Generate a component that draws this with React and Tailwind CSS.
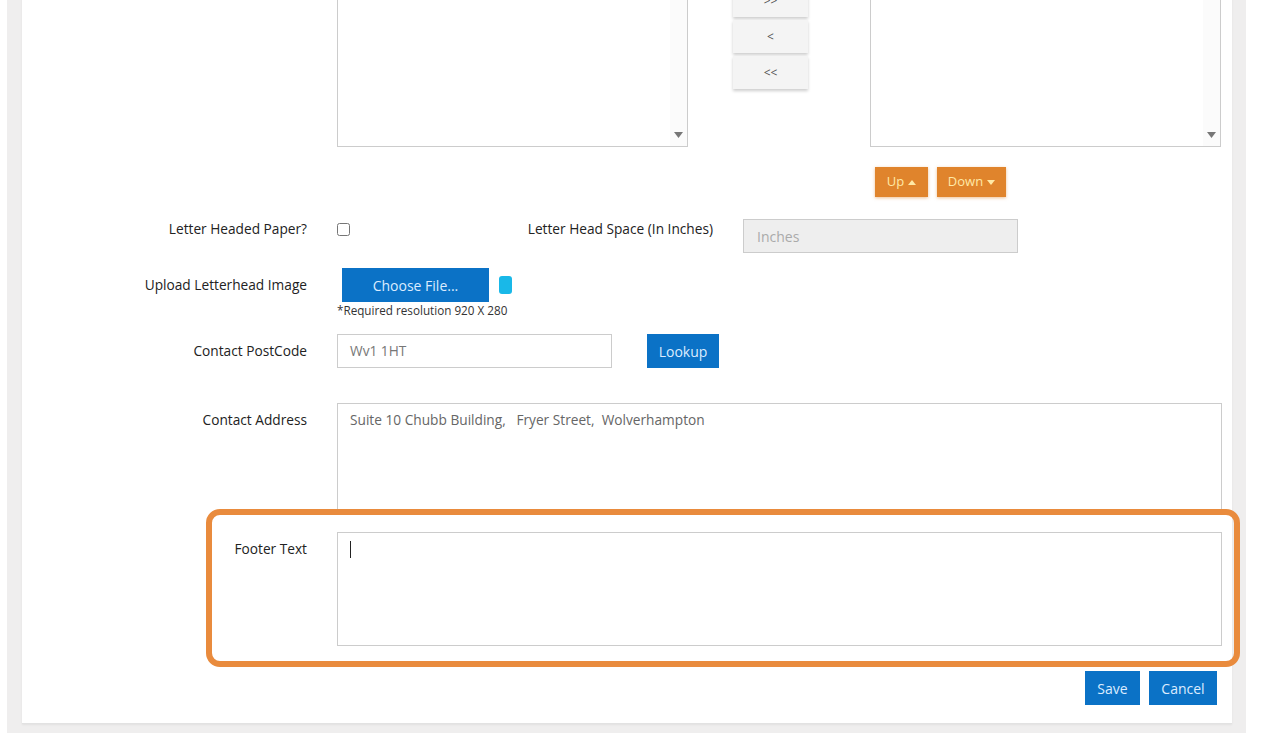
import React from 'react';

const ScrollArrow = () => (
  <div className="absolute right-0 top-0 bottom-0 w-[17px] bg-[#fbfbfb] flex items-end justify-center pb-[8px]">
    <svg width="9" height="6" viewBox="0 0 9 6">
      <path d="M0 0 H9 L4.5 6 Z" fill="#777" />
    </svg>
  </div>
);

const Label = ({ children, className = '' }) => (
  <div className={`w-[285px] shrink-0 text-right text-[13.7px] text-[#222] leading-5 ${className}`}>{children}</div>
);

export default function App() {
  const moveBtn = 'w-[75px] h-[33px] bg-[#f4f4f4] shadow-[0_2px_3px_rgba(0,0,0,0.2)] flex items-center justify-center text-[12px] text-[#555]';
  const blueBtn = 'h-[34px] bg-[#0b72c6] text-[#dcecff] text-[14px] flex items-center justify-center';
  const orangeBtn = 'h-[30px] bg-[#e0842c] text-[#ffe9a6] text-[13px] flex items-center justify-center gap-[4px] shadow-[0_1px_3px_rgba(224,132,44,0.5)]';

  return (
    <div className="relative h-[733px] overflow-hidden bg-white" style={{ fontFamily: '"Open Sans", "Liberation Sans", sans-serif' }}>
      <div className="ml-[7px] w-[1239px] h-[733px] bg-[#efeeee] pl-[15px] flex flex-col">
        <div className="w-[1210px] -mt-[60px] bg-white border-b border-[#e2e2e2] shadow-[0_1px_2px_rgba(0,0,0,0.06)] pb-[18px]">
          {/* list boxes */}
          <div className="flex">
            <div className="w-[285px] shrink-0" />
            <div className="ml-[30px] flex">
              <div className="relative w-[351px] h-[207px] border border-[#cccccc]">
                <ScrollArrow />
              </div>
              <div className="ml-[45px] pt-[8px] flex flex-col gap-[3px]">
                <div className={moveBtn}>&gt;</div>
                <div className={moveBtn}>&gt;&gt;</div>
                <div className={moveBtn}>&lt;</div>
                <div className={moveBtn}>&lt;&lt;</div>
              </div>
              <div className="ml-[62px] relative w-[351px] h-[207px] border border-[#cccccc]">
                <ScrollArrow />
              </div>
            </div>
          </div>

          {/* up / down */}
          <div className="flex mt-[20px]">
            <div className="w-[285px] shrink-0" />
            <div className="ml-[568px] flex gap-[9px]">
              <div className={`${orangeBtn} w-[53px]`}>
                <span>Up</span>
                <svg width="8" height="5" viewBox="0 0 8 5"><path d="M0 5 H8 L4 0 Z" fill="#ffe9a6" /></svg>
              </div>
              <div className={`${orangeBtn} w-[69px]`}>
                <span>Down</span>
                <svg width="8" height="5" viewBox="0 0 8 5"><path d="M0 0 H8 L4 5 Z" fill="#ffe9a6" /></svg>
              </div>
            </div>
          </div>

          {/* letter headed paper */}
          <div className="flex mt-[22px]">
            <Label>Letter Headed Paper?</Label>
            <div className="ml-[30px] flex">
              <div className="w-[376px] flex justify-between">
                <input type="checkbox" className="w-[13px] h-[13px] mt-[4px]" readOnly />
                <div className="text-[13.7px] text-[#222] leading-5">Letter Head Space (In Inches)</div>
              </div>
              <div className="ml-[30px] w-[275px] h-[34px] bg-[#eeeeee] border border-[#cccccc] px-[13px] flex items-center text-[14px] text-[#aaaaaa]">
                Inches
              </div>
            </div>
          </div>

          {/* upload */}
          <div className="flex mt-[15px] items-center">
            <Label>Upload Letterhead Image</Label>
            <div className="ml-[35px] flex items-center">
              <div className={`${blueBtn} w-[147px]`}>Choose File...</div>
              <div className="ml-[10px] w-[13px] h-[18px] rounded-[3px] bg-[#19b8e8]" />
            </div>
          </div>
          <div className="flex">
            <div className="w-[285px] shrink-0" />
            <div className="ml-[30px] text-[11.7px] leading-4 text-[#333]">*Required resolution 920 X 280</div>
          </div>

          {/* postcode */}
          <div className="flex mt-[16px] items-center">
            <Label>Contact PostCode</Label>
            <div className="ml-[30px] flex">
              <div className="w-[275px] h-[34px] border border-[#cccccc] px-[12px] flex items-center text-[13.7px] text-[#777]">
                Wv1 1HT
              </div>
              <div className={`${blueBtn} ml-[35px] w-[72px]`}>Lookup</div>
            </div>
          </div>

          {/* address */}
          <div className="flex mt-[35px]">
            <Label className="pt-[7px]">Contact Address</Label>
            <div className="ml-[30px] w-[885px] h-[110px] border border-[#cccccc] px-[12px] pt-[6px] text-[13.7px] leading-5 text-[#666] whitespace-pre">
              {'Suite 10 Chubb Building,   Fryer Street,  Wolverhampton'}
            </div>
          </div>

          {/* footer text */}
          <div className="flex mt-[19px]">
            <Label className="pt-[7px]">Footer Text</Label>
            <div className="ml-[30px] w-[885px] h-[114px] border border-[#cccccc] px-[12px] pt-[8px]">
              <div className="w-px h-[17px] bg-[#222]" />
            </div>
          </div>

          {/* actions */}
          <div className="flex justify-end mt-[25px] pr-[15px] gap-[9px]">
            <div className={`${blueBtn} w-[55px]`}>Save</div>
            <div className={`${blueBtn} w-[68px]`}>Cancel</div>
          </div>
        </div>
      </div>

      {/* highlight overlay */}
      <div className="absolute left-[206px] top-[509px] w-[1034px] h-[158px] border-[6px] border-[#e98b3d] rounded-[14px] pointer-events-none" />
    </div>
  );
}
